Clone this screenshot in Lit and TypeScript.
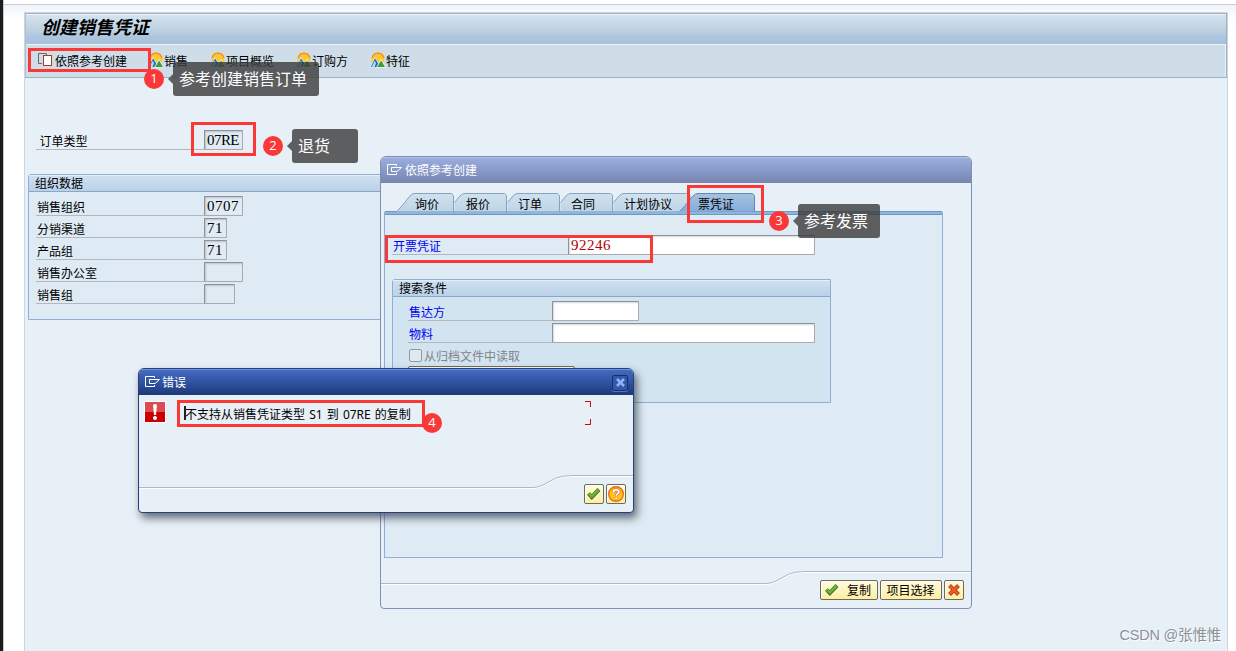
import {LitElement, html, svg, css} from 'lit'
import {customElement, property} from 'lit/decorators.js'

const sceneIcon = svg`
  <path d="M1.5 10.500V6Q3 .8 8 .7Q13 .8 14.300 6V10.500Z" fill="#ffc62e" />
  <path d="M2 6Q3.500 1.200 8 1.200T14 6" fill="none" stroke="#f7931e" stroke-width="1.400" />
  <path d="M0 15.500L5 5.500L11 15.500Z" fill="#1f6fae" stroke="#e4f1f8" stroke-width=".8" />
  <path d="M1.500 15L4.800 8.500L6 11.500L4.500 15Z" fill="#a9dcf7" />
  <path d="M6.500 15.500L11 7.500L15.800 15.500Z" fill="#3f9a48" stroke="#f0f8ea" stroke-width=".9" />
`

const copyIcon = svg`
  <path d="M4 11.500H.5V1.500H8.500V3" fill="none" stroke="#666" />
  <rect x="5.500" y="3.500" width="8" height="10" fill="#fff" stroke="#b2371f" />
`

const menuIcon = svg`
  <path d="M9.500 3V1.500H.5V11.500H9.500V10" fill="none" stroke="#fff" />
  <path d="M4.500 4.500H14.500L10 8.500H4.500Z" fill="none" stroke="#fff" />
`

const checkIcon = svg`
  <path d="M1.500 6.500L4.800 10L12 2.500" fill="none" stroke="#3d6f32" stroke-width="4" />
  <path d="M1.700 6.500L4.800 9.600L11.700 2.700" fill="none" stroke="#6fb82c" stroke-width="2.400" />
`

const crossIcon = svg`
  <path d="M1.500 1.500L10.500 10.500M10.500 1.500L1.500 10.500" fill="none" stroke="#b93d17" stroke-width="4" />
  <path d="M2 2L10 10M10 2L2 10" fill="none" stroke="#e9601c" stroke-width="2.400" />
`

const helpIcon = svg`
  <circle cx="8" cy="8" r="7.300" fill="#ffc414" stroke="#e66a1e" stroke-width="1.400" />
  <path d="M5.300 6.500C5.300 3 10.800 3 10.800 6C10.800 8 8.200 8 8.200 9.800" fill="none" stroke="#d9571b" stroke-width="3.200" />
  <path d="M5.300 6.500C5.300 3 10.800 3 10.800 6C10.800 8 8.200 8 8.200 9.800" fill="none" stroke="#fff" stroke-width="1.900" />
  <circle cx="8.200" cy="12.300" r="1.300" fill="#fff" stroke="#d9571b" stroke-width=".5" />
`

const base = css`
  * {
    box-sizing: border-box;
  }
  svg {
    display: block;
    flex: none;
  }
`

@customElement('x-field')
class Field extends LitElement {
  static styles = [
    base,
    css`
      :host {
        display: flex;
        height: 20px;
      }
      .label {
        flex: none;
        height: 20px;
        padding: 2px 0 0 1px;
        line-height: 18px;
        border-bottom: 1px solid #b4b7bb;
        white-space: nowrap;
      }
      .link {
        color: #0000f0;
      }
      .input {
        flex: none;
        height: 20px;
        padding-left: 2px;
        border: 1px solid #a9abae;
        border-top-color: #8f9194;
        border-left-color: #8f9194;
        border-radius: 1px;
        background: #e1ebf3;
        box-shadow: inset 1px 1px 2px #b9c3cd;
        font: 15px/19px 'Liberation Serif', serif;
        letter-spacing: 0.5px;
        white-space: nowrap;
      }
      .code {
        letter-spacing: -0.55px;
      }
      .edit {
        background: #fff;
        box-shadow: inset 1px 1px 2px #d5d8dc;
        color: #b00000;
      }
    `,
  ]

  @property() label = ''
  @property() value = ''
  @property({type: Number}) labelWidth = 168
  @property({type: Number}) inputWidth = 39
  @property({type: Boolean}) edit = false

  render() {
    // capitals are wider than digits, codes are set tighter to keep the same pitch
    const code = /[A-Z]/.test(this.value) ? 'code' : ''
    return html`
      <div class="label ${this.edit ? 'link' : ''}" style="width:${this.labelWidth}px">${this.label}</div>
      <div class="input ${code} ${this.edit ? 'edit' : ''}" style="width:${this.inputWidth}px">${this.value}</div>
    `
  }
}

@customElement('x-group')
class Group extends LitElement {
  static styles = [
    base,
    css`
      :host {
        display: block;
        border: 1px solid #8fb0d2;
        border-radius: 3px 0 0 0;
      }
      .head {
        height: 17px;
        padding-left: 6px;
        border-bottom: 1px solid #86a8ca;
        border-top: 1px solid #e4eef8;
        background: linear-gradient(#cfdff0, #bad1e8);
        line-height: 14px;
      }
      .rows {
        display: flex;
        flex-direction: column;
        gap: 2px;
        padding: 4px 0 0 7px;
      }
    `,
  ]

  @property() heading = ''

  render() {
    return html`
      <div class="head">${this.heading}</div>
      <div class="rows"><slot></slot></div>
    `
  }
}

@customElement('x-callout')
class Callout extends LitElement {
  static styles = [
    base,
    css`
      :host {
        position: absolute;
        display: flex;
        align-items: center;
        height: 34px;
      }
      .badge {
        width: 20px;
        height: 20px;
        border-radius: 50%;
        background: #fb3838;
        color: #fff;
        font: 13px/19px 'Open Sans', sans-serif;
        text-align: center;
      }
      .arrow {
        margin-left: 4px;
        border: 5px solid transparent;
        border-left: 0;
        border-right-color: #5d5f62;
      }
      .tip {
        height: 34px;
        min-width: 66px;
        padding: 0 12px 0 6px;
        border-radius: 3px;
        background: rgba(60, 60, 60, 0.81);
        color: #fff;
        font-size: 16px;
        line-height: 33px;
        white-space: nowrap;
      }
    `,
  ]

  @property() num = ''
  @property() text = ''

  render() {
    return html`
      <div class="badge">${this.num}</div>
      ${this.text ? html`<div class="arrow"></div><div class="tip">${this.text}</div>` : ''}
    `
  }
}

@customElement('app-root')
class App extends LitElement {
  static styles = [
    base,
    css`
      :host {
        display: block;
        position: relative;
        width: 1236px;
        height: 651px;
        overflow: hidden;
        background: #fff;
        color: #000;
        font: 12px/16px 'Noto Sans CJK SC', sans-serif;
      }
      .desktop {
        height: 651px;
        padding: 12px 8px 0 20px;
        border-left: 3px solid #1c1b1d;
        background: linear-gradient(#fff 4px, #c8cede 4px, #c8cede 5px, #f1f3fa 5px, #fff 20px);
        box-shadow: inset 1px 0 #c3c8d0;
      }
      .frame {
        height: 639px;
        margin-left: 1px;
        border: 1px solid #ccd5e0;
        border-bottom: 0;
        background: #e8f0f7;
      }
      .header {
        border: 1px solid #9db1c5;
        border-left-color: #adc0d1;
      }
      .title {
        height: 31px;
        padding-left: 15px;
        border-top: 1px solid #edf4f9;
        border-bottom: 1px solid #edf4f9;
        background: linear-gradient(#d3e3ef, #bfd2e0 50%, #adc6df 75%, #a9c1db);
        font-size: 18px;
        font-weight: bold;
        font-style: italic;
        line-height: 23px;
      }
      .toolbar {
        display: flex;
        gap: 22px;
        height: 32px;
        padding: 5px 0 0 12px;
        background: #cfdde8;
        box-shadow: inset -1px 0 #e9f2f8;
      }
      .tool {
        display: flex;
        line-height: 22px;
      }
      .tool svg {
        margin-top: 2px;
      }
      .first {
        gap: 2px;
        margin-right: -1px;
      }
      .content {
        padding: 52px 0 0 3px;
      }
      .type {
        padding-left: 8px;
      }
      .org {
        width: 600px;
        height: 146px;
        margin-top: 24px;
        background: #deebf4;
      }

      .window {
        position: absolute;
        display: flex;
        flex-direction: column;
        background: #e8f0f7;
        overflow: hidden;
      }
      .create {
        left: 380px;
        top: 156px;
        width: 592px;
        height: 453px;
        border: 1px solid #7f8fb5;
        border-radius: 6px 6px 4px 4px;
      }
      .bar {
        display: flex;
        align-items: center;
        gap: 3px;
        flex: none;
        height: 26px;
        padding: 0 0 2px 6px;
        border-top: 1px solid #b0c0e6;
        background: linear-gradient(#9badde, #8799c8 50%, #7686ad);
        color: #fff;
      }
      .tabs {
        position: relative;
        z-index: 0;
        display: flex;
        height: 19px;
        margin: 10px 0 0 15px;
        flex: none;
      }
      .tab {
        position: relative;
        flex: none;
        line-height: 21px;
      }
      .tab svg {
        position: absolute;
        left: 0;
        top: 0;
        z-index: -1;
        overflow: visible;
      }
      .panel {
        flex: none;
        width: 559px;
        height: 347px;
        margin: -1px 0 0 3px;
        border: 1px solid #8fb0d2;
        border-top: 1px solid #6f98bf;
        border-radius: 2px 2px 0 0;
        background: #deebf4;
      }
      .strip {
        height: 3px;
        margin-bottom: 20px;
        border-bottom: 1px solid #6f98bf;
        background: #8fb4de;
      }
      .voucher {
        padding-left: 7px;
      }
      .search {
        width: 439px;
        height: 124px;
        margin: 24px 0 0 7px;
        background: #d3e4f1;
      }
      .search x-field {
        margin-left: 8px;
      }
      .archive {
        display: flex;
        align-items: center;
        gap: 2px;
        height: 19px;
        margin-left: 9px;
        padding-top: 2px;
        color: #808488;
      }
      .box {
        width: 13px;
        height: 13px;
        border: 1px solid #96999c;
        border-radius: 2px;
        background: #dfe9f1;
      }
      .btn {
        display: flex;
        align-items: center;
        justify-content: center;
        flex: none;
        height: 20px;
        border: 1px solid #6d6a58;
        border-radius: 2px;
        background: linear-gradient(#fffbe0, #fdeea3);
        box-shadow: inset 1px 1px #fffdf0;
        white-space: nowrap;
      }
      .partial {
        width: 167px;
        margin: 0 0 0 8px;
      }
      .footer {
        position: relative;
        margin-top: auto;
        flex: none;
        height: 37px;
        display: flex;
        justify-content: flex-end;
        gap: 2px;
        padding: 9px 7px 0 0;
      }
      .curve {
        position: absolute;
        left: 0;
        top: 0;
      }
      .copy {
        width: 58px;
        gap: 7px;
        padding-right: 2px;
      }
      .select {
        width: 62px;
        padding-right: 1px;
      }
      .copy,
      .select {
        line-height: 20px;
      }
      .square {
        width: 20px;
      }

      .shadow {
        box-shadow: 3px 5px 8px rgba(50, 60, 75, 0.75);
      }
      .error {
        left: 138px;
        top: 368px;
        width: 496px;
        height: 145px;
        border: 1px solid #25407a;
        border-radius: 6px 6px 4px 4px;
      }
      .error .bar {
        gap: 2px;
        border-top-color: #6f92da;
        background: linear-gradient(#436ac2, #30539f 50%, #1c3878);
      }
      .close {
        display: flex;
        align-items: center;
        justify-content: center;
        width: 16px;
        height: 16px;
        margin: 2px 5px 0 auto;
        border: 1px solid #182f69;
        border-radius: 2px;
        background: #3159a8;
        box-shadow: 0 1px #5478bd;
      }
      .message {
        display: flex;
        gap: 13px;
        height: 36px;
        padding: 6px 42px 0 5px;
      }
      .text {
        position: relative;
        flex: 1;
        height: 24px;
        padding-left: 6px;
        line-height: 25px;
        white-space: nowrap;
      }
      .latin {
        font-family: 'Noto Sans', sans-serif;
        margin: 0 4px 0 3px;
      }
      .caret {
        position: absolute;
        left: 5px;
        top: 5px;
        width: 2px;
        height: 14px;
        background: #222;
      }
      .corners {
        position: absolute;
        right: 0;
        top: 0;
      }

      .mark {
        position: absolute;
        border: 3px solid #fb3838;
      }
      .mark-1 {
        left: 28px;
        top: 48px;
        width: 123px;
        height: 24px;
      }
      .mark-2 {
        left: 191px;
        top: 122px;
        width: 65px;
        height: 34px;
      }
      .mark-3 {
        left: 687px;
        top: 185px;
        width: 77px;
        height: 38px;
      }
      .mark-4 {
        left: 385px;
        top: 235px;
        width: 268px;
        height: 28px;
      }
      .mark-5 {
        left: 177px;
        top: 400px;
        width: 248px;
        height: 27px;
      }
      .note-1 {
        left: 144px;
        top: 62px;
      }
      .note-2 {
        left: 263px;
        top: 129px;
      }
      .note-3 {
        left: 769px;
        top: 204px;
      }
      .note-4 {
        left: 422px;
        top: 406px;
      }
      .watermark {
        position: absolute;
        right: 15px;
        bottom: 6px;
        color: #8d9196;
        font: 14.5px/20px 'Liberation Sans', 'Noto Sans CJK SC', sans-serif;
        letter-spacing: -0.2px;
        text-shadow: 1px 1px #f8fbfd;
      }
    `,
  ]

  // left: text offset inside the tab
  tabs = [
    {text: '询价', width: 58, left: 19},
    {text: '报价', width: 53, left: 12},
    {text: '订单', width: 53, left: 11},
    {text: '合同', width: 53, left: 11},
    {text: '计划协议', width: 66, left: 11},
    {text: '票凭证', width: 76, left: 19},
  ]

  icon(content: unknown, w = 15, h = 15) {
    return html`<svg width=${w} height=${h} viewBox="0 0 ${w} ${h}">${content}</svg>`
  }

  renderTab(tab: {text: string; width: number; left: number}, i: number) {
    const active = i === this.tabs.length - 1
    const full = i === 0 || active
    // the tab before the active one runs on under its slope
    const end = i === this.tabs.length - 2 ? tab.width + 11 : tab.width - 0.5
    const right = `H${end - 2} L${end} 2.5 V18.5`
    const line = full ? `M.5 18.5 L5 14 L14 3 Q16 .5 19 .5 ${right}` : `M.5 9.5 L6 3 Q8 .5 11 .5 ${right}`
    const fill = full ? line : `M.5 18.5 V9.5 L6 3 Q8 .5 11 .5 ${right}`
    return html`
      <div class="tab" style="width:${tab.width}px;padding-left:${tab.left}px">
        <svg width=${tab.width} height="19">
          <defs>
            <linearGradient id="fill-${i}" x2="0" y2="1">
              <stop stop-color=${active ? '#a3c3df' : '#d0e1ee'} />
              <stop offset="1" stop-color=${active ? '#86acdc' : '#bed5e8'} />
            </linearGradient>
          </defs>
          <path d=${fill} fill="url(#fill-${i})" />
          <path d=${line} fill="none" stroke=${active ? '#5d8bb5' : '#83a3c0'} />
        </svg>
        ${tab.text}
      </div>
    `
  }

  renderCurve(width: number, start: number, length: number) {
    const path = (y: number) =>
      `M0 ${y + 12.5} H${start - 5} Q${start} ${y + 12.5} ${start + 5} ${y + 10} L${start + length - 16} ${y + 3} Q${start + length - 9} ${y + 0.5} ${start + length} ${y + 0.5} H${width}`
    return html`
      <svg class="curve" width=${width} height="16">
        <path d=${path(1)} fill="none" stroke="#fff" />
        <path d=${path(0)} fill="none" stroke="#a9bacd" />
      </svg>
    `
  }

  renderMain() {
    return html`
      <div class="desktop">
        <div class="frame">
          <div class="header">
            <div class="title">创建销售凭证</div>
            <div class="toolbar">
              <div class="tool first">${this.icon(copyIcon)}依照参考创建</div>
              ${['销售', '项目概览', '订购方', '特征'].map(
                (name) => html`<div class="tool">${this.icon(sceneIcon, 16, 16)}${name}</div>`
              )}
            </div>
          </div>
          <div class="content">
            <x-field class="type" label=${'\u2009订单类型'} value="07RE"></x-field>
            <x-group class="org" heading="组织数据">
              <x-field label="销售组织" value="0707"></x-field>
              <x-field label="分销渠道" value="71" inputWidth="23"></x-field>
              <x-field label="产品组" value="71" inputWidth="23"></x-field>
              <x-field label="销售办公室"></x-field>
              <x-field label="销售组" inputWidth="31"></x-field>
            </x-group>
          </div>
        </div>
      </div>
    `
  }

  renderCreate() {
    return html`
      <div class="window create">
        <div class="bar">${this.icon(menuIcon, 15, 13)}依照参考创建</div>
        <div class="tabs">${this.tabs.map((tab, i) => this.renderTab(tab, i))}</div>
        <div class="panel">
          <div class="strip"></div>
          <x-field class="voucher" edit label="开票凭证" value="92246" labelWidth="176" inputWidth="247"></x-field>
          <x-group class="search" heading="搜索条件">
            <x-field edit label="售达方" labelWidth="144" inputWidth="87"></x-field>
            <x-field edit label="物料" labelWidth="144" inputWidth="263"></x-field>
            <div class="archive"><span class="box"></span>从归档文件中读取</div>
            <div class="btn partial"></div>
          </x-group>
        </div>
        <div class="footer">
          ${this.renderCurve(590, 390, 34)}
          <div class="btn copy">${this.icon(checkIcon)}复制</div>
          <div class="btn select">项目选择</div>
          <div class="btn square">${this.icon(crossIcon, 13, 13)}</div>
        </div>
      </div>
    `
  }

  renderError() {
    return html`
      <div class="window error shadow">
        <div class="bar">
          ${this.icon(menuIcon, 15, 13)}错误
          <div class="close">
            ${this.icon(svg`<path d="M1 1L8 8M8 1L1 8" stroke="#8fb1ff" stroke-width="2.600" />`, 9, 9)}
          </div>
        </div>
        <div class="message">
          ${this.icon(
            svg`
              <rect width="22" height="22" fill="#fff" />
              <rect x="1" y="1" width="20" height="20" fill="#cc0000" />
              <rect x="1" y="1" width="20" height="10" fill="#dc4c50" />
              <path d="M9 4Q11 2 13 4L12 14H10Z" fill="#fff" />
              <circle cx="11" cy="17" r="2" fill="#fff" />
            `,
            22,
            22
          )}
          <div class="text">
            不支持从销售凭证类型<span class="latin">&#8202;S1</span>到<span class="latin">&#8202;07RE</span>的复制
            <i class="caret"></i>
            <svg class="corners" width="6" height="24">
              <path d="M0 .5H5.5V6M0 23.5H5.5V18" fill="none" stroke="#d90000" />
            </svg>
          </div>
        </div>
        <div class="footer">
          ${this.renderCurve(494, 399, 34)}
          <div class="btn square">${this.icon(checkIcon)}</div>
          <div class="btn square">${this.icon(helpIcon, 16, 16)}</div>
        </div>
      </div>
    `
  }

  render() {
    return html`
      ${this.renderMain()} ${this.renderCreate()} ${this.renderError()}
      ${[1, 2, 3, 4, 5].map((n) => html`<div class="mark mark-${n}"></div>`)}
      <x-callout class="note-1" num="1" text="参考创建销售订单"></x-callout>
      <x-callout class="note-2" num="2" text="退货"></x-callout>
      <x-callout class="note-3" num="3" text="参考发票"></x-callout>
      <x-callout class="note-4" num="4"></x-callout>
      <div class="watermark">CSDN @张惟惟</div>
    `
  }
}
